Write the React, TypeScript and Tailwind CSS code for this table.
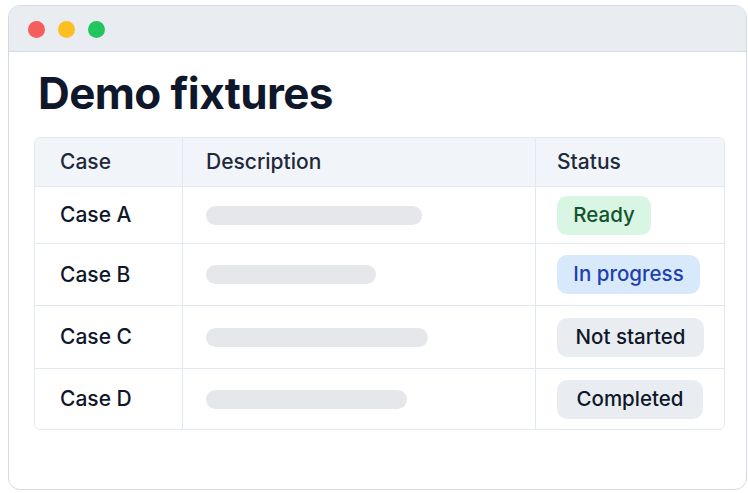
import React from "react";

const rows = [
  { name: "Case A", bar: 216, h: "h-[57px]", badge: "Ready", w: 94, cls: "bg-[#d9f5e3] text-[#14532d]" },
  { name: "Case B", bar: 170, h: "h-[62px]", badge: "In progress", w: 143, cls: "bg-[#d8e9fc] text-[#1e40af]" },
  { name: "Case C", bar: 222, h: "h-[63px]", badge: "Not started", w: 147, cls: "bg-[#e9edf2] text-[#0f172a]" },
  { name: "Case D", bar: 201, h: "h-[61px]", badge: "Completed", w: 146, cls: "bg-[#e9edf2] text-[#0f172a]" },
];

export default function App() {
  return (
    <div
      className="w-[748px] h-[493px] bg-white pt-[5px] pl-[8px]"
      style={{ fontFamily: "Inter, 'Noto Sans', sans-serif" }}
    >
      <div className="w-[739px] h-[485px] border border-[#d5dae1] rounded-[12px] overflow-hidden bg-white flex flex-col">
        <div className="h-[46px] shrink-0 bg-[#e9edf2] border-b border-[#d5dae1] flex items-center pl-[19px] pt-[2px] gap-[13px]">
          <span className="w-[17px] h-[17px] rounded-full bg-[#f25f5c]" />
          <span className="w-[17px] h-[17px] rounded-full bg-[#fbbf24]" />
          <span className="w-[17px] h-[17px] rounded-full bg-[#22c55e]" />
        </div>
        <div className="pl-[25px] pr-[22px]">
          <h1 className="mt-[19px] ml-[4px] text-[44px] leading-[44px] font-bold text-[#0f172a] tracking-[-0.6px]">
            Demo fixtures
          </h1>
          <div className="mt-[22px] w-[691px] border border-[#e2e8f0] rounded-[6px] overflow-hidden">
            <div className="grid grid-cols-[147px_353px_1fr] h-[48px] bg-[#f1f5f9] text-[21px] font-medium text-[#1e293b]">
              <div className="flex items-center pl-[25px]">Case</div>
              <div className="flex items-center pl-[23px] border-l border-[#e2e8f0]">Description</div>
              <div className="flex items-center pl-[21px] border-l border-[#e2e8f0]">Status</div>
            </div>
            {rows.map((r) => (
              <div
                key={r.name}
                className={`grid grid-cols-[147px_353px_1fr] ${r.h} border-t border-[#e2e8f0] text-[21px] font-medium`}
              >
                <div className="flex items-center pl-[25px] text-[#0f172a]">{r.name}</div>
                <div className="flex items-center pl-[23px] border-l border-[#e2e8f0]">
                  <div className="h-[19px] rounded-full bg-[#e5e7eb]" style={{ width: r.bar }} />
                </div>
                <div className="flex items-center pl-[21px] border-l border-[#e2e8f0]">
                  <span
                    className={`h-[39px] rounded-[10px] flex items-center justify-center text-[20.5px] ${r.cls}`}
                    style={{ width: r.w }}
                  >
                    {r.badge}
                  </span>
                </div>
              </div>
            ))}
          </div>
        </div>
      </div>
    </div>
  );
}
